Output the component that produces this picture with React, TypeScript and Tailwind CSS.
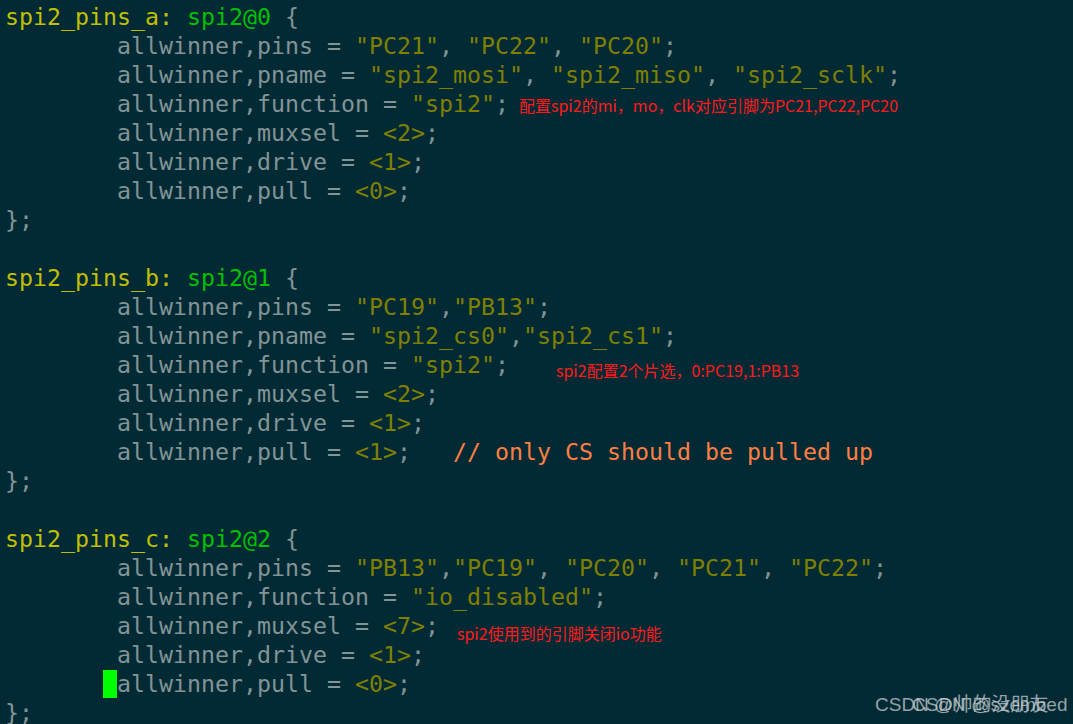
import React from "react";

type Tok = [string, string];

const G = "text-[#839496]";
const S = "text-[#808000]";
const Y = "text-[#c0c000]";
const GR = "text-[#00c000]";
const OR = "text-[#ff7f42]";

const prop = (name: string, val: Tok[]): Tok[] => [
  [G, `        allwinner,${name} = `],
  ...val,
];

const strs = (items: string[], seps: string[]): Tok[] => {
  const out: Tok[] = [];
  items.forEach((it, i) => {
    out.push([S, `"${it}"`]);
    out.push([G, seps[i]]);
  });
  return out;
};

const num = (n: string): Tok[] => [
  [S, `<${n}>`],
  [G, ";"],
];

type Line = { toks: Tok[]; note?: { text: string; cls: string }; cursor?: boolean };

const header = (label: string, node: string): Tok[] => [
  [Y, label],
  [G, " "],
  [GR, node],
  [G, " {"],
];

const LINES: Line[] = [
  { toks: header("spi2_pins_a:", "spi2@0") },
  { toks: prop("pins", strs(["PC21", "PC22", "PC20"], [", ", ", ", ";"])) },
  { toks: prop("pname", strs(["spi2_mosi", "spi2_miso", "spi2_sclk"], [", ", ", ", ";"])) },
  {
    toks: prop("function", strs(["spi2"], [";"])),
    note: { text: "配置spi2的mi，mo，clk对应引脚为PC21,PC22,PC20", cls: "ml-[10px] translate-y-[1px]" },
  },
  { toks: prop("muxsel", num("2")) },
  { toks: prop("drive", num("1")) },
  { toks: prop("pull", num("0")) },
  { toks: [[G, "};"]] },
  { toks: [] },
  { toks: header("spi2_pins_b:", "spi2@1") },
  { toks: prop("pins", strs(["PC19", "PB13"], [",", ";"])) },
  { toks: prop("pname", strs(["spi2_cs0", "spi2_cs1"], [",", ";"])) },
  {
    toks: prop("function", strs(["spi2"], [";"])),
    note: { text: "spi2配置2个片选，0:PC19,1:PB13", cls: "ml-[47px] translate-y-[5px]" },
  },
  { toks: prop("muxsel", num("2")) },
  { toks: prop("drive", num("1")) },
  { toks: [...prop("pull", num("1")), [OR, "   // only CS should be pulled up"]] },
  { toks: [[G, "};"]] },
  { toks: [] },
  { toks: header("spi2_pins_c:", "spi2@2") },
  {
    toks: prop(
      "pins",
      strs(["PB13", "PC19", "PC20", "PC21", "PC22"], [",", ", ", ", ", ", ", ";"])
    ),
  },
  { toks: prop("function", strs(["io_disabled"], [";"])) },
  {
    toks: prop("muxsel", num("7")),
    note: { text: "spi2使用到的引脚关闭io功能", cls: "ml-[18px] translate-y-[7px]" },
  },
  { toks: prop("drive", num("1")) },
  { toks: prop("pull", num("0")), cursor: true },
  { toks: [[G, "};"]] },
];

export default function App() {
  return (
    <div className="relative w-[1073px] h-[724px] overflow-hidden bg-[#012a35]">
      <div
        className="pl-[5px] pt-[2px] text-[23.25px] whitespace-pre"
        style={{ fontFamily: '"DejaVu Sans Mono", monospace' }}
      >
        {LINES.map((ln, i) => (
          <div key={i} className="flex items-center h-[29px] leading-[29px]">
            {ln.cursor ? (
              <>
                <span className={G}>{"       "}</span>
                <span className="inline-block w-[14px] h-[28px] bg-[#00ff00]" />
                <span className={G}>{ln.toks[0][1].trimStart()}</span>
                {ln.toks.slice(1).map((t, j) => (
                  <span key={j} className={t[0]}>
                    {t[1]}
                  </span>
                ))}
              </>
            ) : (
              ln.toks.map((t, j) => (
                <span key={j} className={t[0]}>
                  {t[1]}
                </span>
              ))
            )}
            {ln.note && (
              <span
                className={`${ln.note.cls} text-[16px] leading-none text-[#ff1a1a]`}
                style={{ fontFamily: '"Noto Sans CJK SC", "Noto Sans", sans-serif' }}
              >
                {ln.note.text}
              </span>
            )}
          </div>
        ))}
      </div>
      {/* watermark overlay */}
      <div
        className="absolute left-[875px] top-[695px] text-[19px] leading-none text-[#c8cdd0]/75 whitespace-pre"
        style={{ fontFamily: '"Liberation Sans", "Noto Sans CJK SC", sans-serif' }}
      >
        CSDN @帅的没朋友
      </div>
      <div
        className="absolute left-[912px] top-[695px] text-[19px] leading-none text-[#c8cdd0]/75 whitespace-pre"
        style={{ fontFamily: '"Liberation Sans", sans-serif' }}
      >
        CSDN @szembed
      </div>
    </div>
  );
}
